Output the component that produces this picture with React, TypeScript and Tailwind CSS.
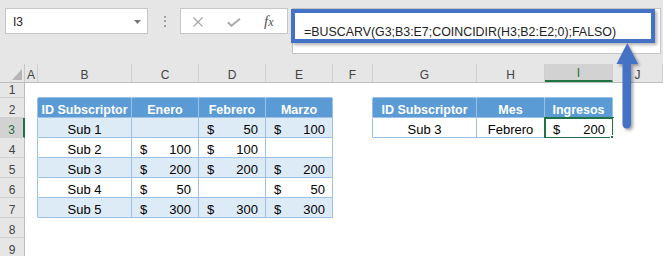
import React from 'react';

type Cell = { text?: string; money?: string; head?: boolean };

const COLS = [
  { id: 'A', w: 'w-[13px]' },
  { id: 'B', w: 'w-[94px]' },
  { id: 'C', w: 'w-[67px]' },
  { id: 'D', w: 'w-[67px]' },
  { id: 'E', w: 'w-[67px]' },
  { id: 'F', w: 'w-[40px]' },
  { id: 'G', w: 'w-[104px]' },
  { id: 'H', w: 'w-[68px]' },
  { id: 'I', w: 'w-[68px]' },
  { id: 'J', w: 'w-[50px]' },
];

const ROWS = [1, 2, 3, 4, 5, 6, 7, 8, 9];

const cells: Record<string, Cell> = {
  B2: { text: 'ID Subscriptor', head: true },
  C2: { text: 'Enero', head: true },
  D2: { text: 'Febrero', head: true },
  E2: { text: 'Marzo', head: true },
  B3: { text: 'Sub 1' },
  D3: { money: '50' },
  E3: { money: '100' },
  B4: { text: 'Sub 2' },
  C4: { money: '100' },
  D4: { money: '100' },
  B5: { text: 'Sub 3' },
  C5: { money: '200' },
  D5: { money: '200' },
  E5: { money: '200' },
  B6: { text: 'Sub 4' },
  C6: { money: '50' },
  E6: { money: '50' },
  B7: { text: 'Sub 5' },
  C7: { money: '300' },
  D7: { money: '300' },
  E7: { money: '300' },
  G2: { text: 'ID Subscriptor', head: true },
  H2: { text: 'Mes', head: true },
  I2: { text: 'Ingresos', head: true },
  G3: { text: 'Sub 3' },
  H3: { text: 'Febrero' },
  I3: { money: '200' },
};

// tablas: B2:E7 y G2:I3
const inTable = (c: number, r: number) =>
  (c >= 1 && c <= 4 && r >= 2 && r <= 7) || (c >= 6 && c <= 8 && r >= 2 && r <= 3);

function SheetCell({ c, r }: { c: number; r: number }) {
  const col = COLS[c];
  const cell = cells[col.id + r];
  const right = inTable(c, r) || inTable(c + 1, r) ? 'border-r-[#9bc2e6]' : 'border-r-white';
  const bottom = inTable(c, r) || inTable(c, r + 1) ? 'border-b-[#9bc2e6]' : 'border-b-white';
  const band = c >= 1 && c <= 4 && (r === 3 || r === 5 || r === 7);
  const bg = cell?.head ? 'bg-[#5b9bd5]' : band ? 'bg-[#ddebf7]' : 'bg-white';
  const selected = col.id === 'I' && r === 3;

  return (
    <div
      className={`${col.w} ${bg} ${right} ${bottom} relative shrink-0 box-border border-r border-b flex items-end pb-px leading-none`}
    >
      {cell?.head && (
        <span className="w-full text-center text-[12.5px] font-bold text-white">{cell.text}</span>
      )}
      {cell?.text && !cell.head && (
        <span className="w-full text-center text-[13px] text-black">{cell.text}</span>
      )}
      {cell?.money && (
        <span className="w-full flex justify-between pl-[8px] pr-[7px] text-[13px] text-black">
          <span>$</span>
          <span>{cell.money}</span>
        </span>
      )}
      {selected && (
        <>
          <div className="absolute -left-px -top-px w-[70px] h-[22px] border-2 border-[#217346]" />
          <div className="absolute left-[65px] top-[17px] w-[7px] h-[7px] bg-[#217346] border border-white" />
        </>
      )}
    </div>
  );
}

export default function App() {
  return (
    <div className="relative w-[663px] h-[256px] overflow-hidden bg-white font-['Liberation_Sans',Arial,sans-serif]">
      {/* barra de fórmulas */}
      <div className="h-[64px] bg-[#e6e6e6] flex items-start pt-[8px]">
        <div className="ml-[5px] w-[143px] h-[26px] bg-white border border-[#c6c6c6] flex items-center justify-between pl-[7px] pr-[6px] pt-[2px]">
          <span className="text-[12px] leading-none text-[#222]">I3</span>
          <svg width="7" height="4" viewBox="0 0 7 4">
            <path d="M0 0h7L3.5 4z" fill="#777" />
          </svg>
        </div>
        <div className="w-[32px] h-[26px] flex flex-col items-center justify-center gap-[2.5px] pl-[1px]">
          <div className="w-[2px] h-[2px] bg-[#a0a0a0]" />
          <div className="w-[2px] h-[2px] bg-[#a0a0a0]" />
          <div className="w-[2px] h-[2px] bg-[#a0a0a0]" />
        </div>
        <div className="w-[108px] h-[26px] bg-white border border-[#c6c6c6] flex items-center pl-[12px]">
          <svg width="10" height="10" viewBox="0 0 10 10" className="mt-[1px]">
            <path d="M0.5 0.5l9 9M9.5 0.5l-9 9" stroke="#a6a6a6" strokeWidth="1.2" />
          </svg>
          <svg width="14" height="9" viewBox="0 0 14 9" className="ml-[24px] mt-[3px]">
            <path d="M0.8 4.2l3.6 3.6L13 0.8" stroke="#ababab" strokeWidth="2" fill="none" />
          </svg>
          <span className="ml-[23px] font-['Liberation_Serif',serif] italic text-[15px] leading-none text-[#555]">
            f<span className="text-[12px]">x</span>
          </span>
        </div>
        <div className="ml-[4px] w-[369px] h-[46px] bg-white border border-[#c6c6c6] pl-[11px] pt-[10px]">
          <span className="text-[12.4px] leading-none text-[#222] whitespace-nowrap">
            =BUSCARV(G3;B3:E7;COINCIDIR(H3;B2:E2;0);FALSO)
          </span>
        </div>
      </div>

      {/* encabezados de columna */}
      <div className="flex h-[19px] bg-[#e6e6e6] border-b border-[#bdbdbd] box-border">
        <div className="w-[25px] shrink-0 border-r border-[#c8c8c8] flex items-end justify-end pr-[2px] pb-[2px]">
          <svg width="10" height="11" viewBox="0 0 10 11">
            <path d="M10 0v11H0z" fill="#b5b5b5" />
          </svg>
        </div>
        {COLS.map((col) => (
          <div
            key={col.id}
            className={`${col.w} shrink-0 box-border border-r border-[#cfcfcf] flex items-end justify-center pb-px text-[12px] leading-none ${
              col.id === 'I'
                ? 'bg-[#d2d2d2] text-[#217346] border-b-2 border-b-[#217346]'
                : 'text-[#444]'
            }`}
          >
            {col.id}
          </div>
        ))}
      </div>

      {/* filas */}
      {ROWS.map((r) => (
        <div key={r} className={`flex ${r === 1 ? 'h-[15px]' : 'h-[20px]'}`}>
          <div
            className={`w-[25px] shrink-0 box-border border-b border-b-[#d0d0d0] flex items-end justify-center pb-px text-[12px] leading-none ${
              r === 3
                ? 'bg-[#d2d2d2] text-[#217346] border-r-2 border-r-[#217346]'
                : 'bg-[#e6e6e6] text-[#444] border-r border-r-[#bdbdbd]'
            }`}
          >
            {r}
          </div>
          {COLS.map((col, c) => (
            <SheetCell key={col.id} c={c} r={r} />
          ))}
        </div>
      ))}

      {/* anotación: recuadro y flecha */}
      <div className="absolute left-[291px] top-[9px] w-[364px] h-[34px] border-4 border-[#4472c4] shadow-[2px_2px_3px_rgba(0,0,0,0.3)]" />
      <svg
        className="absolute left-[612px] top-[40px] drop-shadow-[2px_2px_1.5px_rgba(0,0,0,0.35)]"
        width="32"
        height="95"
        viewBox="612 40 32 95"
      >
        <path d="M627.3 43L638 64H616.5z" fill="#4472c4" />
        <rect x="622.5" y="61" width="8.5" height="67.5" rx="4.25" fill="#4472c4" />
      </svg>
    </div>
  );
}
